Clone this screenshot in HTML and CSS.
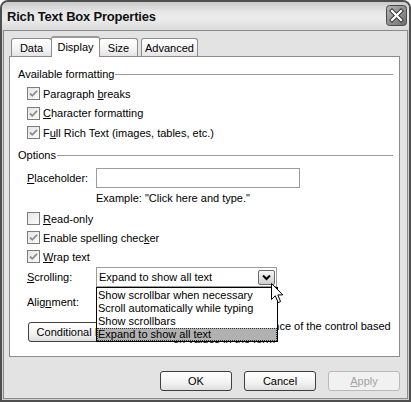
FILE: index.html
```html
<!DOCTYPE html>
<html>
<head>
<meta charset="utf-8">
<link rel="stylesheet" href="styles.css">
</head>
<body>
<div class="window">
  <div class="titlebar">
    <span class="title">Rich Text Box Properties</span>
    <span class="close">
      <svg width="21" height="21" viewBox="0 0 21 21">
        <defs>
          <linearGradient id="cg" x1="0" y1="0" x2="1" y2="1">
            <stop offset="0" stop-color="#b4b4b4"/>
            <stop offset="1" stop-color="#6e6e6e"/>
          </linearGradient>
        </defs>
        <rect x="0.5" y="0.5" width="20" height="20" rx="3" fill="url(#cg)" stroke="#4a4a4a"/>
        <path d="M6 6 L15 15 M15 6 L6 15" stroke="#3a3a3a" stroke-width="4.2" stroke-linecap="square"/>
        <path d="M6 6 L15 15 M15 6 L6 15" stroke="#ffffff" stroke-width="2.2" stroke-linecap="square"/>
      </svg>
    </span>
  </div>
  <div class="body">
    <div class="tabs">
      <div class="tab t-data">Data</div>
      <div class="tab active t-display">Display</div>
      <div class="tab t-size">Size</div>
      <div class="tab t-adv">Advanced</div>
    </div>
    <div class="panel">
      <div class="group-title"><span>Available formatting</span><i class="rule"></i></div>
      <div class="group first">
        <div class="check"><span class="box"><svg width="11" height="11" viewBox="0 0 11 11"><path d="M2 5.5 L4.3 7.8 L9 2.8" stroke="#8d8d8d" stroke-width="1.8" fill="none"/></svg></span><span>Paragraph <u>b</u>reaks</span></div>
        <div class="check"><span class="box"><svg width="11" height="11" viewBox="0 0 11 11"><path d="M2 5.5 L4.3 7.8 L9 2.8" stroke="#8d8d8d" stroke-width="1.8" fill="none"/></svg></span><span><u>C</u>haracter formatting</span></div>
        <div class="check"><span class="box"><svg width="11" height="11" viewBox="0 0 11 11"><path d="M2 5.5 L4.3 7.8 L9 2.8" stroke="#8d8d8d" stroke-width="1.8" fill="none"/></svg></span><span>F<u>u</u>ll Rich Text (images, tables, etc.)</span></div>
      </div>
      <div class="group-title second"><span>Options</span><i class="rule"></i></div>
      <div class="group">
        <div class="field-row placeholder-row">
          <span class="field-label"><u>P</u>laceholder:</span>
          <span class="input"></span>
        </div>
        <div class="example">Example: "Click here and type."</div>
        <div class="checks2">
          <div class="check"><span class="box"></span><span><u>R</u>ead-only</span></div>
          <div class="check"><span class="box"><svg width="11" height="11" viewBox="0 0 11 11"><path d="M2 5.5 L4.3 7.8 L9 2.8" stroke="#8d8d8d" stroke-width="1.8" fill="none"/></svg></span><span>Enable spelling chec<u>k</u>er</span></div>
          <div class="check"><span class="box"><svg width="11" height="11" viewBox="0 0 11 11"><path d="M2 5.5 L4.3 7.8 L9 2.8" stroke="#8d8d8d" stroke-width="1.8" fill="none"/></svg></span><span><u>W</u>rap text</span></div>
        </div>
        <div class="field-row scroll-row">
          <span class="field-label"><u>S</u>crolling:</span>
          <div class="select">
            <span class="select-value">Expand to show all text</span>
            <span class="drop-btn"><svg width="9" height="7" viewBox="0 0 9 7"><path d="M1 1.5 L4.5 5 L8 1.5" stroke="#000" stroke-width="2" fill="none"/></svg></span>
            <div class="list">
              <div class="item">Show scrollbar when necessary</div>
              <div class="item">Scroll automatically while typing</div>
              <div class="item">Show scrollbars</div>
              <div class="item selected">Expand to show all text</div>
            </div>
            <svg class="cursor" width="13" height="21" viewBox="0 0 13 21">
              <path d="M0.5 0.5 L0.5 16.5 L4.3 12.8 L7.2 19.6 L9.6 18.6 L6.8 11.9 L11.8 11.9 Z" fill="#fff" stroke="#000" stroke-width="1" stroke-linejoin="round"/>
            </svg>
          </div>
        </div>
        <div class="align-row">Alig<u>n</u>ment:</div>
        <div class="cond-row">
          <span class="btn cond-btn">Conditional Formatting...</span>
          <span class="cond-text">Change the appearance of the control based<br>on values in the form</span>
        </div>
      </div>
    </div>
    <div class="buttons">
      <span class="btn dlg">OK</span>
      <span class="btn dlg">Cancel</span>
      <span class="btn dlg disabled"><u>A</u>pply</span>
    </div>
  </div>
</div>
</body>
</html>
```
FILE: styles.css
```css
* { box-sizing: border-box; }
html, body { margin: 0; padding: 0; background: #fff; }
body {
  font-family: "Liberation Sans", Arial, sans-serif;
  font-size: 11px;
  color: #000;
}
u { text-decoration: underline; text-underline-offset: 1px; }

.window {
  width: 411px;
  height: 402px;
  border: 2px solid #4f4f4f;
  border-radius: 8px 8px 0 0;
  background: #cfcfcf;
  display: flex;
  flex-direction: column;
  overflow: hidden;
}

.titlebar {
  height: 28px;
  flex: none;
  display: flex;
  align-items: center;
  justify-content: space-between;
  padding: 0 2px 0 5px;
  background: linear-gradient(to bottom, #c9c9c9 0%, #e6e6e6 35%, #ececec 60%, #dadada 100%);
}
.title {
  font-weight: bold;
  font-size: 13px;
  letter-spacing: -0.2px;
  color: #111;
}
.close { display: flex; margin-top: -1px; }

.body {
  flex: 1;
  margin: 0 1px 1px;
  border: 1px solid #8a8a8a;
  background: #e3e3e3;
  padding: 5px 7px 7px 5px;
  display: flex;
  flex-direction: column;
}

.tabs {
  display: flex;
  align-items: flex-end;
  height: 20px;
  margin-left: 2px;
}
.tab {
  height: 18px;
  border: 1px solid #8c8c8c;
  border-bottom: none;
  border-radius: 3px 3px 0 0;
  background: linear-gradient(to bottom, #ffffff, #f3f3f3 60%, #e4e4e4);
  display: flex;
  align-items: center;
  justify-content: center;
  padding-top: 1px;
}
.tab.active {
  height: 21px;
  margin-bottom: -1px;
  background: #fff;
  position: relative;
  z-index: 1;
  border-top: 2px solid #9a9a9a;
  padding-top: 0;
  padding-bottom: 2px;
}
.t-data { width: 41px; }
.t-display { width: 49px; margin-left: -1px; }
.t-size { width: 39px; margin-left: -1px; }
.t-adv { width: 57px; margin-left: 3px; }

.panel {
  height: 301px;
  flex: none;
  border: 1px solid #8c8c8c;
  background: #fff;
  padding: 10px 6px 0 8px;
}

.group-title {
  display: flex;
  align-items: center;
  height: 14px;
  gap: 1px;
}
.group-title .rule {
  flex: 1;
  height: 0;
  border-top: 1px solid #9a9a9a;
  margin-top: 1px;
}
.group-title.second { margin-top: 5px; }

.group { padding-left: 9px; }
.group.first { margin-top: 3px; }
.group.first .check { height: 19.5px; }

.check {
  display: flex;
  align-items: center;
  height: 19px;
}
.box {
  width: 13px;
  height: 13px;
  border: 1px solid #7c7c7c;
  background: linear-gradient(135deg, #e6e6e6, #fbfbfb);
  margin-right: 3px;
  display: flex;
  align-items: center;
  justify-content: center;
  flex: none;
}

.field-row {
  display: flex;
  align-items: center;
  height: 20px;
}
.placeholder-row { margin-top: 6.5px; }
.field-label { width: 69px; flex: none; }
.input {
  width: 204px;
  height: 20px;
  border: 1px solid #9c9c9c;
  background: #fff;
}
.example {
  margin-top: 3px;
  height: 14px;
  line-height: 14px;
  margin-left: 69px;
}
.checks2 { margin-top: 4px; }

.scroll-row { margin-top: 1px; }
.select {
  position: relative;
  z-index: 5;
  width: 181px;
  height: 20px;
  border: 1px solid #9c9c9c;
  background: #fff;
  display: flex;
  align-items: center;
  padding-left: 2px;
}
.select-value { flex: 1; }
.drop-btn {
  width: 17px;
  height: 15px;
  margin-right: 1px;
  margin-top: 1px;
  border: 1px solid #6a6a6a;
  border-radius: 2px;
  background: linear-gradient(to bottom, #f6f6f6, #cfcfcf);
  display: flex;
  align-items: center;
  justify-content: center;
}
.list {
  position: absolute;
  top: 19px;
  left: -1px;
  width: 182px;
  border: 1px solid #000;
  background: #fff;
  padding-top: 1px;
}
.item {
  height: 13px;
  line-height: 13px;
  padding-left: 1px;
  white-space: nowrap;
}
.item.selected {
  background: #b1b1b1;
  outline: 1px dotted #333;
  outline-offset: -1px;
}
.cursor {
  position: absolute;
  left: 174px;
  top: 15px;
}

.align-row {
  margin-top: 7px;
  height: 16px;
  line-height: 16px;
}
.cond-row {
  margin-top: 12px;
  display: flex;
  align-items: flex-start;
}
.btn {
  display: flex;
  align-items: center;
  justify-content: center;
  height: 20px;
  border: 1px solid #3f3f3f;
  border-radius: 3px;
  background: linear-gradient(to bottom, #ffffff, #f2f2f2 60%, #dedede);
}
.cond-btn {
  width: 137px;
  margin-left: 1px;
  flex: none;
}
.cond-text {
  margin-left: 8px;
  margin-top: -2px;
  line-height: 13px;
  white-space: nowrap;
}

.buttons {
  margin-top: 14px;
  display: flex;
  justify-content: flex-end;
  gap: 12px;
}
.btn.dlg { width: 72px; }
.btn.disabled {
  border-color: #b9b9b9;
  color: #a2a2a2;
  background: #f1f1f1;
}
```
